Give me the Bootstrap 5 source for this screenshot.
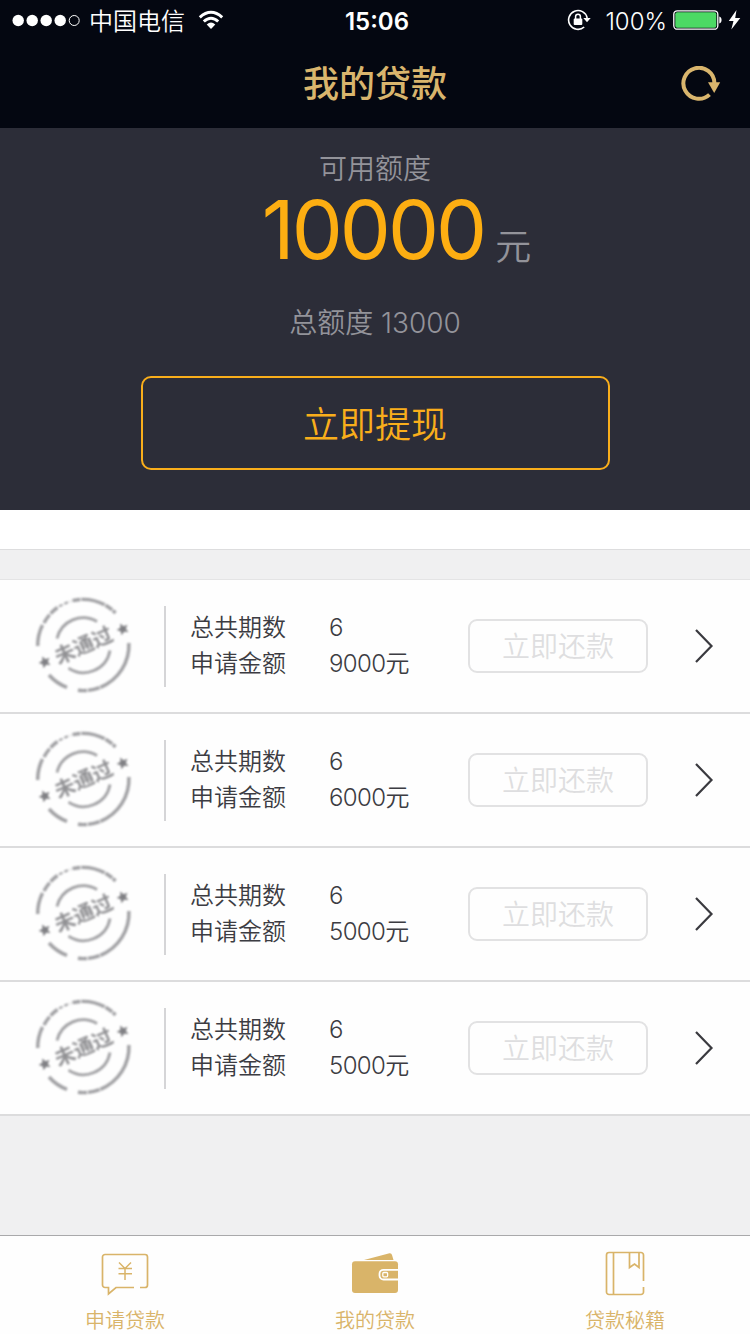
<!DOCTYPE html>
<html lang="zh-CN">

<head>
    <meta charset="UTF-8">
    <meta name="viewport" content="width=device-width, initial-scale=1.0">
    <title>我的贷款</title>
    <link href="https://cdn.jsdelivr.net/npm/bootstrap@5.3.0/dist/css/bootstrap.min.css" rel="stylesheet">
    <style>
        body {
            background-color: #F0F0F1;
            font-family: Inter, "Noto Sans CJK SC", sans-serif;
            line-height: 1;
        }

        svg {
            display: block;
            flex-shrink: 0;
        }

        .app {
            height: 1334px;
        }

        .top-area {
            background-color: #040711;
        }

        .status-bar {
            height: 40px;
            font-size: 24px;
        }

        .status-bar span {
            padding-top: 3px;
        }

        .status-side {
            flex: 1 1 0;
        }

        .carrier {
            margin-left: 7px;
            font-weight: 350;
        }

        .battery-text {
            margin-left: 14px;
            font-weight: 350;
        }

        .bolt {
            margin-left: 8px;
            margin-right: 7px;
        }

        .title-bar {
            height: 88px;
            color: #D9B56D;
        }

        .title-text {
            font-size: 36px;
            font-weight: 500;
            line-height: 88px;
        }

        .quota {
            height: 382px;
            background-color: #2C2D38;
            color: #93939A;
            padding-top: 21px;
            padding-bottom: 40px;
        }

        .quota-label {
            font-size: 28px;
            font-weight: 350;
            line-height: 40px;
        }

        .quota-total {
            margin-top: 14px;
        }

        .quota-row {
            height: 100px;
            padding-left: 43px;
        }

        .quota-amount {
            color: #FDAE12;
            font-size: 81px;
            font-weight: 400;
            line-height: 82px;
            letter-spacing: -3px;
        }

        .quota-unit {
            margin-left: 11px;
            padding-top: 16px;
            font-size: 36px;
            font-weight: 350;
            line-height: 84px;
        }

        .btn-withdraw {
            width: 469px;
            height: 94px;
            border: 2px solid #F9AE1B;
            border-radius: 10px;
            color: #F9AE1B;
            font-size: 36px;
            font-weight: 350;
            padding-top: 10px;
        }

        .white-strip {
            height: 40px;
            border-bottom: 1px solid #DDDDDE;
        }

        .loan-list {
            margin-top: 29px;
            border-top: 1px solid #E4E4E5;
        }

        .loan-item {
            height: 134px;
            background-color: #FEFEFE;
            border-bottom: 2px solid #DCDCDD;
            padding-left: 34px;
            padding-right: 36px;
            color: #3C3C42;
            font-size: 24px;
            font-weight: 350;
            line-height: 36px;
        }

        .stamp {
            filter: blur(.8px);
        }

        .divider {
            width: 2px;
            height: 81px;
            margin-left: 30px;
            background-color: #D5D5D7;
        }

        .loan-labels {
            width: 139px;
            margin-left: 24px;
        }

        .loan-values {
            width: 139px;
            letter-spacing: -.6px;
        }

        .btn-repay,
        .btn-repay:disabled {
            width: 180px;
            height: 54px;
            padding: 1px 0 0;
            border: 2px solid #E2E2E3;
            border-radius: 9px;
            color: #DEDEE0;
            font-size: 28px;
            font-weight: 350;
            opacity: 1;
        }

        .tab-bar {
            height: 99px;
            background-color: #FEFEFE;
            border-top: 1px solid #A9A9AB;
        }

        .tab-item {
            color: #D9B469;
            font-size: 20px;
            font-weight: 350;
            padding-top: 14px;
        }

        .tab-item span {
            padding-top: 13px;
        }
    </style>
</head>

<body>
    <div class="app d-flex flex-column">
        <header class="top-area">
            <div class="status-bar d-flex align-items-center text-white">
                <div class="status-side d-flex align-items-center">
                    <svg class="ms-2" width="74" height="14" viewBox="-4 0 74 14">
                        <g fill="#fff">
                            <circle cx="6.2" cy="7.5" r="5.7" />
                            <circle cx="20.2" cy="7.5" r="5.7" />
                            <circle cx="34.2" cy="7.5" r="5.7" />
                            <circle cx="48.2" cy="7.5" r="5.7" />
                        </g>
                        <circle cx="62.2" cy="7.5" r="5" fill="none" stroke="#fff" />
                    </svg>
                    <span class="carrier">中国电信</span>
                    <svg class="ms-2" width="30" height="20" viewBox="-5 0 30 20" overflow="visible">
                        <path d="M1.8 7.3 Q13-2.7 24.2 7.3" fill="none" stroke="#fff" stroke-width="3" />
                        <path d="M5.8 11.5 Q13 4.9 20.2 11.5" fill="none" stroke="#fff" stroke-width="3" />
                        <path d="M8.7 14.5 Q13 10.5 17.3 14.5 L13 19Z" fill="#fff" />
                    </svg>
                </div>
                <span class="fw-semibold ps-1">15:06</span>
                <div class="status-side d-flex align-items-center justify-content-end">
                    <svg width="24" height="22" viewBox="0 0 24 22">
                        <path d="M20.2 9 A9.4 9.4 0 1 0 17.2 18" fill="none" stroke="#fff" stroke-width="1.6" />
                        <path d="M16.3 9h7.4L20 13.2Z" fill="#fff" />
                        <rect x="6.7" y="9.5" width="8.6" height="6.6" rx="1" fill="#fff" />
                        <path d="M8.6 10V7.6a2.4 2.4 0 0 1 4.8 0V10" fill="none" stroke="#fff" stroke-width="1.5" />
                    </svg>
                    <span class="battery-text">100%</span>
                    <svg class="ms-2" width="47" height="20" viewBox="2 0 47 20" overflow="visible">
                        <rect x=".8" y=".8" width="44" height="18.4" rx="3.5" fill="none" stroke="#fff" stroke-width="1.3" />
                        <rect x="2.3" y="2.3" width="41" height="15.4" rx="2" fill="#4CD964" />
                        <path d="M46.3 6.5c3 .8 3 6.2 0 7Z" fill="#fff" />
                    </svg>
                    <svg class="bolt" width="13" height="20" viewBox="2 0 13 20" overflow="visible">
                        <path d="M8.5 0 .8 11H5.5L3.3 19.5 12.3 8H7.2Z" fill="#fff" />
                    </svg>
                </div>
            </div>
            <div class="title-bar d-flex align-items-center">
                <div class="status-side"></div>
                <h1 class="title-text m-0">我的贷款</h1>
                <div class="status-side d-flex justify-content-end">
                    <svg class="me-4" width="45" height="36" viewBox="0 1 45 36">
                        <path d="M33.4 18 A15.5 15.5 0 1 0 28.5 29.6" fill="none" stroke="#D9B56D" stroke-width="4" />
                        <path d="M27 17.3H39.2L33.2 28Z" fill="#D9B56D" />
                    </svg>
                </div>
            </div>
        </header>

        <section class="quota d-flex flex-column align-items-center">
            <div class="quota-label">可用额度</div>
            <div class="quota-row d-flex">
                <span class="quota-amount">10000</span>
                <span class="quota-unit">元</span>
            </div>
            <div class="quota-label quota-total">总额度 13000</div>
            <button type="button" class="btn btn-withdraw mt-auto">立即提现</button>
        </section>

        <div class="white-strip bg-white"></div>

        <div class="loan-list" id="loanList"></div>

        <nav class="tab-bar d-flex mt-auto">
            <a class="tab-item col-4 d-flex flex-column align-items-center text-decoration-none" href="#">
                <svg width="50" height="48" viewBox="0 0 50 48" fill="none" stroke="#D9B469" stroke-width="1.7">
                    <path d="M34 37.5H16L8.5 44V37.5H5A2.5 2.5 0 0 1 2.5 35V7A2.5 2.5 0 0 1 5 4.5H45A2.5 2.5 0 0 1 47.5 7V35A2.5 2.5 0 0 1 45 37.5H40" />
                    <path d="M19 12.5 25 18.5 31 12.5M25 18.5V30M18.5 18.5H32M18.5 23.8H32" stroke-width="1.5" />
                </svg>
                <span>申请贷款</span>
            </a>
            <a class="tab-item col-4 d-flex flex-column align-items-center text-decoration-none" href="#">
                <svg width="50" height="48" viewBox="0 0 50 48">
                    <path d="M14 10 39.5 3.3Q41.5 3 42 5L43.5 10Z" fill="#D9B469" />
                    <rect x="2" y="11.3" width="46" height="31.7" rx="3" fill="#D9B469" />
                    <path d="M48 19.8H33.5A4 4 0 0 0 29.5 23.8V25.5A4 4 0 0 0 33.5 29.5H48" fill="none" stroke="#fff" stroke-width="1.8" />
                    <rect x="32.8" y="22.5" width="4.8" height="4.3" rx="1" fill="none" stroke="#fff" stroke-width="1.3" />
                </svg>
                <span>我的贷款</span>
            </a>
            <a class="tab-item col-4 d-flex flex-column align-items-center text-decoration-none" href="#">
                <svg width="50" height="48" viewBox="0 0 50 48" fill="none" stroke="#D9B469" stroke-width="1.7">
                    <path d="M43.5 31V5A2.5 2.5 0 0 0 41 2.5H9A2.5 2.5 0 0 0 6.500 5V42A2.500 2.500 0 0 0 9 44.500H41A2.500 2.500 0 0 0 43.500 42V37" />
                    <path d="M13.5 2.5V44.5M29.5 2.5V17.5L34.5 14 39 17.5V2.5" />
                </svg>
                <span>贷款秘籍</span>
            </a>
        </nav>
    </div>

    <script src="https://cdn.jsdelivr.net/npm/bootstrap@5.3.0/dist/js/bootstrap.bundle.min.js"></script>
    <script>
        const loans = [
            { periods: 6, amount: 9000 },
            { periods: 6, amount: 6000 },
            { periods: 6, amount: 5000 },
            { periods: 6, amount: 5000 }
        ];

        const star = "M0-6 1.8-2.1 6-1.8 2.9 1 3.8 5.200 0 3.100-3.800 5.200-2.900 1-6-1.800-1.800-2.100Z";

        // "not approved" rubber stamp
        const stamp = `
            <svg class="stamp" width="100" height="100" viewBox="0.5 1 100 100">
                <g fill="none" stroke="#A0A0A3" stroke-width="3.4">
                    <path d="M4.2 51 A45.5 45.5 0 0 1 9 30" />
                    <path d="M10.5 28 A45.5 45.5 0 0 1 24 12.5" stroke-dasharray="10 1.5" />
                    <path d="M25.5 11.5 A45.5 45.5 0 0 1 37 6.5" stroke-width="2" stroke-dasharray="4 2" />
                    <path d="M39 5.6 A45.500 45.500 0 0 1 82 18" stroke-dasharray="8 1 24 1" />
                    <path d="M95.4 48 A45.500 45.500 0 0 1 41 94.7" stroke-dasharray="56 .8 12 1 9" />
                    <path d="M33.5 92.4 A45.500 45.500 0 0 1 15.5 80" />
                    <path d="M23.5 43.5 A27 27 0 0 1 63.5 26.5" stroke-width="2.8" />
                    <path d="M76.5 55.5 A27 27 0 0 1 35 73.2" stroke-width="2.8" />
                </g>
                <path fill="#808084" transform="translate(11.3 67) rotate(-25)" d="${star}" />
                <path fill="#808084" transform="translate(89.3 34) rotate(-25)" d="${star}" />
                <text transform="translate(50 50) rotate(-24)" y="7.8" text-anchor="middle" fill="#919194"
                    font-size="20.5" font-weight="700" font-family="Noto Sans CJK SC, sans-serif">未通过</text>
            </svg>`;

        const list = document.getElementById("loanList");
        loans.forEach(loan => {
            const item = document.createElement("div");
            item.className = "loan-item d-flex align-items-center";
            item.innerHTML = `
                ${stamp}
                <div class="divider"></div>
                <div class="loan-labels">
                    <div>总共期数</div>
                    <div>申请金额</div>
                </div>
                <div class="loan-values">
                    <div>${loan.periods}</div>
                    <div>${loan.amount}元</div>
                </div>
                <button type="button" class="btn btn-repay" disabled>立即还款</button>
                <svg class="ms-auto" width="20" height="36" viewBox="0 0 20 36">
                    <path d="M2 2 17.5 18 2 34" fill="none" stroke="#3A3A3F" stroke-width="2.2" />
                </svg>`;
            list.appendChild(item);
        });
    </script>
</body>

</html>
